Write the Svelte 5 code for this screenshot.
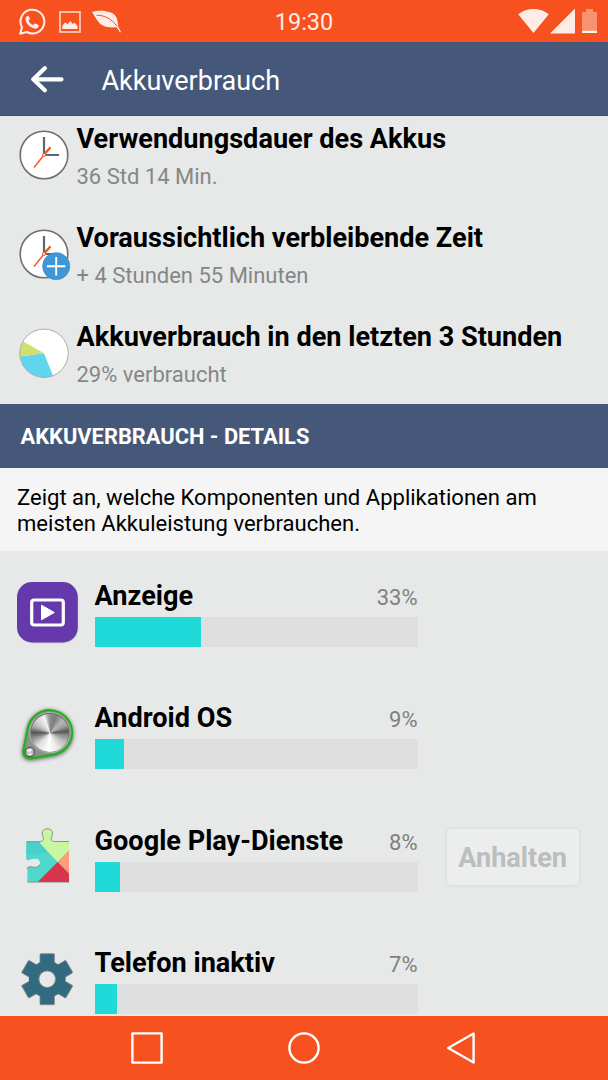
<script>
	// ─── Battery summary ────────────────────────────
	const summary = [
		{ icon: 'clock', title: 'Verwendungsdauer des Akkus', value: '36 Std 14 Min.' },
		{ icon: 'clock-plus', title: 'Voraussichtlich verbleibende Zeit', value: '+ 4 Stunden 55 Minuten' },
		{ icon: 'pie', title: 'Akkuverbrauch in den letzten 3 Stunden', value: '29% verbraucht' }
	];

	// ─── Consumers ──────────────────────────────────
	const consumers = [
		{ icon: 'display', name: 'Anzeige', percent: 33 },
		{ icon: 'knob', name: 'Android OS', percent: 9 },
		{ icon: 'puzzle', name: 'Google Play-Dienste', percent: 8, stoppable: true },
		{ icon: 'gear', name: 'Telefon inaktiv', percent: 7 }
	];

	const teeth = [0, 60, 120, 180, 240, 300];
</script>

<div class="screen">
	<header class="status-bar">
		<div class="status-left">
			<svg width="28" height="28" viewBox="0 0 28 28" aria-label="WhatsApp">
				<path
					d="M2.2 25.7 4 19.3A11.9 11.9 0 1 1 8.7 24Z"
					fill="none"
					stroke="#ffece6"
					stroke-width="2"
					stroke-linejoin="round"
				/>
				<path
					d="M9.2 8C8 8.8 7.1 10.2 7.6 12.2c1 3.7 4.6 7.3 8.5 8.3 2.3.4 4.8-.7 4.9-3.1l-3.8-2.2-1.9 1.9c-2.2-.8-3.9-2.5-4.8-4.4l1.5-1.7-1.5-3.2Z"
					fill="#ffece6"
				/>
			</svg>
			<svg width="22" height="22" viewBox="0 0 22 22" aria-label="Bild">
				<rect x="1" y="1" width="20" height="20" fill="none" stroke="#ffd8cb" stroke-width="1.6" />
				<path d="M3.2 18v-3.1l3-3.7 2.1 2 3.2-3.2 2.2 2.9 2-1.2 2.8 3.2V18Z" fill="#ffece6" />
			</svg>
			<svg class="feather" width="31" height="24" viewBox="0 0 31 24" aria-label="Feder">
				<path
					d="M1 2C8-.2 20 .7 24.2 5.5c2.6 3 2.5 8 3.2 11.5l2.6 5-1 .4-3.3-5.1c-3.5.1-9.4.9-14.7-2.2C6.6 12.3 4.3 7 1 2Z"
					fill="#ffece6"
				/>
				<path d="M5.5 5.3c7.3-.3 14.6 3.1 20.7 11" fill="none" stroke="#f6511f" stroke-width="1" />
			</svg>
		</div>
		<time>19:30</time>
		<div class="status-right">
			<svg width="31" height="26" viewBox="0 0 31 26" aria-label="WLAN">
				<path d="M.2 6.2C9-.9 22-.9 30.8 6.2L15.5 25Z" fill="#ffece6" />
			</svg>
			<svg width="25" height="26" viewBox="0 0 25 26" aria-label="Mobilfunk">
				<path d="M0 25.5 25 .5v25Z" fill="#ffece6" />
			</svg>
			<svg class="battery" width="15" height="25" viewBox="0 0 15 25" aria-label="Akku">
				<path d="M0 3h4V0h7v3h4v18H0Z" fill="#fa9270" />
				<path d="M0 21.5h15V24H0Z" fill="#fff5f1" />
			</svg>
		</div>
	</header>

	<div class="app-bar">
		<svg width="34" height="28" viewBox="0 0 34 28" aria-label="Zurück">
			<path
				d="M14.8 3.3 3.3 14.3 14.8 25.3M4 14.3H31.5"
				fill="none"
				stroke="#fff"
				stroke-width="4.2"
				stroke-linecap="round"
				stroke-linejoin="round"
			/>
		</svg>
		<h1>Akkuverbrauch</h1>
	</div>

	<section class="summary">
		{#each summary as item (item.icon)}
			<div class="summary-row">
				<svg width="54" height="52" viewBox="0 -1 54 52" aria-hidden="true">
					{#if item.icon === 'pie'}
						<circle cx="25" cy="25.3" r="24.2" fill="#fff" />
						<path d="M25 25.3 34 47.7A24.2 24.2 0 0 1 1.1 28.5Z" fill="#61d5ed" />
						<path d="M25 25.3 1.1 28.5A24.2 24.2 0 0 1 4.4 13.5Z" fill="#cde070" />
						<circle cx="25" cy="25.3" r="24.2" fill="none" stroke="#9b9c9f" stroke-width=".8" />
					{:else}
						<circle cx="25" cy="25" r="23.8" fill="#fff" stroke="#6e6e76" stroke-width="1.6" />
						<path d="M25 7V25H40" fill="none" stroke="#5c6a70" stroke-width="2.2" />
						<path d="M15 37.5 25 25l6-6.5" fill="none" stroke="#fa5423" stroke-width="1.4" />
						<path d="m26.5 22.8 5-5.5" stroke="#fa5423" stroke-width="2.2" />
						<circle cx="25" cy="25" r="1.5" fill="#fff" stroke="#fa5423" />
						{#if item.icon === 'clock-plus'}
							<circle cx="37.2" cy="37.2" r="13.6" fill="#3e97d9" stroke="#3b7fb5" stroke-width=".5" />
							<path d="M37.2 28v18.4M28 37.2h18.4" stroke="#fff" stroke-width="1.9" />
						{/if}
					{/if}
				</svg>
				<div class="summary-text">
					<h2>{item.title}</h2>
					<p>{item.value}</p>
				</div>
			</div>
		{/each}
	</section>

	<h3 class="section-title">AKKUVERBRAUCH - DETAILS</h3>
	<p class="description">Zeigt an, welche Komponenten und Applikationen am meisten Akkuleistung verbrauchen.</p>

	<ul class="consumers">
		{#each consumers as c (c.name)}
			<li>
				<svg class="app-icon" width="62" height="62" viewBox="0 0 62 62" aria-hidden="true">
					{#if c.icon === 'display'}
						<rect x="1" y="1.5" width="60.3" height="60" rx="15" fill="#cfd0d1" />
						<rect x="0" y="0" width="60.8" height="60.5" rx="15" fill="#6539ac" />
						<rect x="14.7" y="18" width="31.6" height="25" rx="2.5" fill="none" stroke="#fff" stroke-width="3.2" />
						<path d="M24.5 23.2v14.6L37.3 30.5Z" fill="#fff" stroke="#fff" stroke-linejoin="round" />
					{:else if c.icon === 'knob'}
						<path
							class="knob-base"
							d="M10.6 25.5A22.3 22.3 0 1 1 37.5 50.3L14.5 54.2C9.3 55 5.4 51.5 6.5 46.3Z"
							fill="#8e918e"
							stroke="#1fb41b"
							stroke-width="2.2"
						/>
						<circle cx="33" cy="28.5" r="20.6" fill="#b8bab8" />
						<circle cx="33" cy="28.5" r="19.8" fill="#6f726f" />
						<foreignObject x="14" y="9.5" width="38" height="38">
							<div class="knob-face"></div>
						</foreignObject>
						<circle cx="12.8" cy="48" r="5.2" fill="#555855" />
						<circle cx="12.8" cy="48" r="4" fill="#b4b6b4" />
						<path d="M9.8 47q3-4 5.5-1l-2.5 2Z" fill="#f5f5f5" />
						<path d="M10.3 50.5q3 2 5.5-.5l-3-2Z" fill="#e0e0e0" />
					{:else if c.icon === 'puzzle'}
						<clipPath id="piece">
							<path
								d="M9.5 15.7h12q5-.2 5-3.2c0-2-1.4-2.4-1.4-5.2 0-6 10.4-6 10.4 0 0 2.8-1.3 3.2-1.3 5.2 0 2.8 1.5 3 4.5 3h13.3v40.6H10.4V43q0-2.3 2.3-2.3l5.3.7c6.4.4 6.6-8.6.8-8.6-3 0-4.2 1-6.8.6q-3-.3-2.8-3Z"
							/>
						</clipPath>
						<g clip-path="url(#piece)">
							<path d="M9 0h43v57H9Z" fill="#4dd8cb" />
							<path d="M9 15.5h16l9 10.5L9 29Z" fill="#4bcfcd" />
							<path d="M23.5 18 40.6 36 52.2 24.4V0H20Z" fill="#c9f6a2" />
							<path d="M40.6 36 53 23.6v25Z" fill="#ff9c7a" />
							<path d="M20.3 56.3 40.6 36 60 55.4v1Z" fill="#d8354c" />
						</g>
						<path
							d="M9.5 15.7h12q5-.2 5-3.2c0-2-1.4-2.4-1.4-5.2 0-6 10.4-6 10.4 0 0 2.8-1.3 3.2-1.3 5.2 0 2.8 1.5 3 4.5 3h13.3M9.3 32.5q1 1 2.7.9M10.4 43q0-2.3 2.3-2.3l5.3.7q3.5.2 4.8-3M10.4 56.1h41.8"
							fill="none"
							stroke="#77837b"
							stroke-width=".8"
						/>
					{:else}
						<g transform="translate(30.2 30.2)" fill="#326b80" stroke="#8b8293" stroke-width=".8">
							{#each teeth as angle (angle)}
								<path d="M-7.2-15v-9.8q0-.7.7-.7h13q.7 0 .7.7v9.8Z" transform="rotate({angle})" />
							{/each}
							<circle r="18.4" stroke="none" />
							<circle r="8.3" fill="#e6e9e8" />
						</g>
					{/if}
				</svg>
				<div class="usage">
					<div class="usage-head">
						<h2>{c.name}</h2>
						<span>{c.percent}%</span>
					</div>
					<div class="track">
						<div class="fill" style="width: {c.percent}%"></div>
					</div>
				</div>
				{#if c.stoppable}
					<button disabled>Anhalten</button>
				{/if}
			</li>
		{/each}
	</ul>

	<nav>
		<svg width="32" height="32" viewBox="0 0 32 32" aria-label="Übersicht">
			<rect x="1.4" y="1.4" width="29.2" height="29.2" />
		</svg>
		<svg width="32" height="32" viewBox="0 0 32 32" aria-label="Startseite">
			<circle cx="16" cy="16" r="14.6" />
		</svg>
		<svg width="32" height="32" viewBox="0 0 32 32" aria-label="Zurück">
			<path d="M28.6 1.5v29L3.2 16Z" />
		</svg>
	</nav>
</div>

<style>
	:global(body) {
		margin: 0;
	}
	.screen {
		display: flex;
		flex-direction: column;
		width: 608px;
		height: 1080px;
		overflow: hidden;
		background: #e6e9e8;
		color: #000;
		font-family: Roboto, sans-serif;
	}
	h1, h2, h3, p, ul {
		margin: 0;
		padding: 0;
	}
	svg {
		display: block;
		flex: none;
	}

	/* ─── Status bar ─────────────────────────────── */
	.status-bar {
		display: grid;
		grid-template-columns: 1fr auto 1fr;
		align-items: center;
		flex: none;
		height: 42px;
		padding: 0 11px 0 18px;
		box-sizing: border-box;
		background: #f6511f;
	}
	.status-left {
		display: flex;
		align-items: center;
		gap: 12.5px;
		padding-top: 1px;
	}
	.feather {
		margin-left: -2px;
	}
	time {
		margin-top: 1px;
		padding-right: 7px;
		color: #ffece6;
		font-size: 23.5px;
		line-height: 28px;
	}
	.status-right {
		display: flex;
		align-items: center;
		justify-content: flex-end;
		gap: 1px;
	}
	.battery {
		margin-left: 6px;
	}

	/* ─── App bar ────────────────────────────────── */
	.app-bar {
		display: flex;
		align-items: center;
		gap: 37.5px;
		flex: none;
		height: 74px;
		padding-left: 30px;
		box-sizing: border-box;
		border-bottom: 1px solid #3b4f75;
		background: #465879;
	}
	h1 {
		padding-top: 5px;
		color: #fff;
		font-size: 27px;
		font-weight: 400;
	}

	/* ─── Summary ────────────────────────────────── */
	.summary {
		flex: none;
		height: 287.5px;
		overflow: hidden;
	}
	.summary-row {
		display: flex;
		align-items: center;
		gap: 3.5px;
		height: 99.1px;
		padding-left: 19px;
	}
	.summary-row:first-child {
		margin-top: -11px;
	}
	h2 {
		font-size: 27.1px;
		font-weight: 700;
		line-height: 32px;
		white-space: nowrap;
	}
	.summary-text {
		padding-top: 5.5px;
	}
	.summary-text p {
		margin-top: 8px;
		color: #858787;
		font-size: 22px;
		line-height: 28px;
	}

	/* ─── Details ────────────────────────────────── */
	.section-title {
		flex: none;
		height: 64px;
		padding-left: 20.5px;
		background: #465879;
		color: #fff;
		font-size: 21.85px;
		line-height: 66px;
	}
	.description {
		flex: none;
		height: 83px;
		padding: 17px 40px 0 17px;
		box-sizing: border-box;
		background: #f5f5f5;
		font-size: 22.05px;
		line-height: 26px;
	}
	.consumers {
		flex: 1;
		min-height: 0;
		overflow: hidden;
		padding-top: 1px;
		list-style: none;
	}
	li {
		display: flex;
		align-items: center;
		height: 122.3px;
		padding-left: 17px;
	}
	.usage {
		width: 323px;
		margin-left: 15.6px;
		padding-top: 1.6px;
	}
	.usage-head {
		display: flex;
		align-items: baseline;
		justify-content: space-between;
		margin-bottom: 5px;
	}
	.usage-head span {
		color: #7e8080;
		font-size: 22px;
	}
	.track {
		height: 30px;
		background: #dfdfdf;
	}
	.fill {
		height: 100%;
		background: #20dada;
	}
	button {
		width: 136px;
		height: 60px;
		margin-left: 27px;
		padding: 2px 0 0;
		border: 2px solid #e0e2e2;
		border-radius: 6px;
		background: #eceeed;
		color: #bbbdbe;
		font: 700 27.1px Roboto, sans-serif;
	}
	.knob-base {
		filter: drop-shadow(0 1px 2px #555);
	}
	.knob-face {
		width: 38px;
		height: 38px;
		border-radius: 50%;
		background: conic-gradient(
			#8d8d8d, #7d7d7d 20deg, #b5b5b5 45deg, #a0a0a0 65deg, #555 85deg, #8a8a8a 98deg,
			#c4c4c4 125deg, #eee 160deg, #fff 185deg, #ddd 225deg, #999 250deg, #555 272deg,
			#a8a8a8 290deg, #d0d0d0 310deg, #f4f4f4 340deg, #b0b0b0 352deg, #8d8d8d
		);
	}

	/* ─── Navigation ─────────────────────────────── */
	nav {
		display: flex;
		align-items: center;
		justify-content: center;
		gap: 125px;
		flex: none;
		height: 64px;
		background: #f6511f;
	}
	nav svg {
		fill: none;
		stroke: #fff;
		stroke-width: 2.4;
		stroke-linejoin: round;
	}
</style>
